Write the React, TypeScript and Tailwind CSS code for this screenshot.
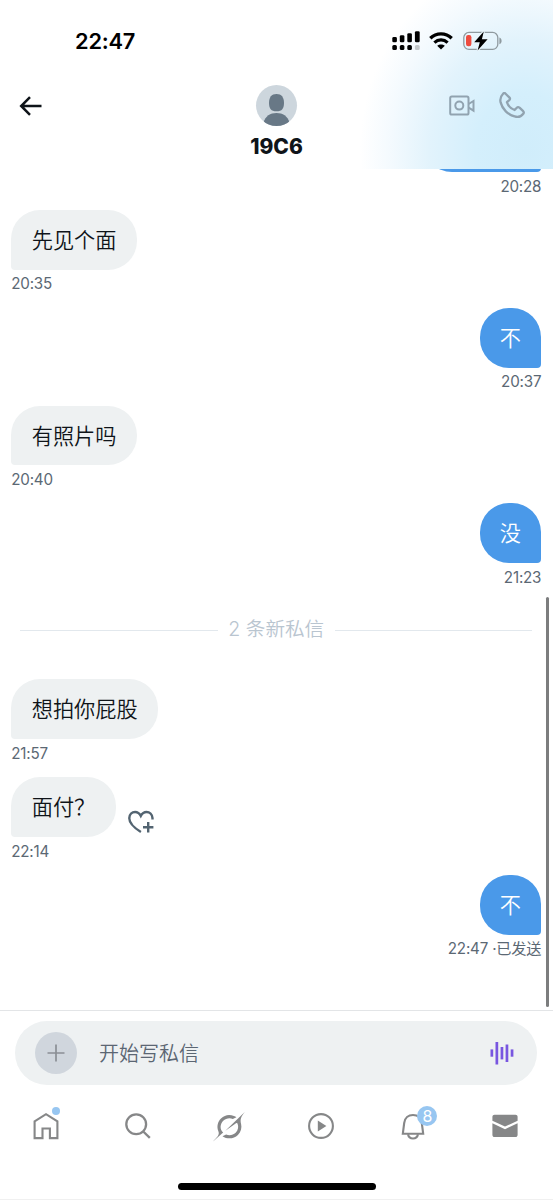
import type { ReactNode } from "react";

enum Side {
  IN = "in",
  OUT = "out",
}

type MessageProps = {
  side: Side;
  text?: string;
  time: string;
  action?: ReactNode;
};

const SignalIcon = () => (
  <svg width="28" height="20" viewBox="0 0 28 20">
    <rect x="0.3" y="6" width="4.6" height="5.3" rx="1.4" />
    <rect x="7.8" y="4.2" width="4.6" height="7.1" rx="1.4" />
    <rect x="15.3" y="2.2" width="4.6" height="9.1" rx="1.4" />
    <rect x="22.9" y="0.2" width="4.8" height="11.1" rx="1.4" />
    <rect x="0.3" y="14" width="4.6" height="4.9" rx="1.5" />
    <rect x="7.8" y="14" width="4.6" height="4.9" rx="1.5" />
    <rect x="15.3" y="14" width="4.6" height="4.9" rx="1.5" />
    <rect x="22.9" y="14" width="4.8" height="4.9" rx="1.5" fill="#c4c8ca" />
  </svg>
);

const WifiIcon = () => (
  <svg width="24" height="18" viewBox="0 0 24 18" fill="none">
    <path d="M1.3 6.3C7.3 0.4 16.7 0.4 22.7 6.3" stroke="#000" strokeWidth="3.3" />
    <path d="M5.4 10.6C9.2 7 14.8 7 18.6 10.6" stroke="#000" strokeWidth="3.2" />
    <path d="M12 17.6L8.2 13.8C10.3 11.9 13.7 11.9 15.8 13.8Z" fill="#000" />
  </svg>
);

const BatteryIcon = () => (
  <svg width="39" height="20" viewBox="0 0 39 20">
    <rect x="0.8" y="1.4" width="34" height="17" rx="5.2" fill="none" stroke="#8f9a9f" strokeWidth="1.3" />
    <path d="M36.4 6.600v6.600c1.400-.5 2.200-1.800 2.200-3.300s-.8-2.800-2.200-3.300z" fill="#8f9a9f" />
    <rect x="3" y="4" width="5.4" height="11.3" rx="2.2" fill="#ee4c3f" />
    <path d="M20.800 0.400L11.200 11.200h5.600l-2.200 8.400L24.600 8.200h-5.700z" stroke="#eaf6fc" strokeWidth="2.200" paintOrder="stroke" />
  </svg>
);

const BackIcon = () => (
  <svg width="24" height="20" viewBox="0 0 24 20" fill="none" stroke="#0f1419" strokeWidth="2.5">
    <path d="M11 1.2L2.200 10l8.800 8.800M2.400 10H22.500" />
  </svg>
);

const VideoIcon = () => (
  <svg width="26" height="22" viewBox="0 0 26 22" fill="none" stroke="#91a3b0" strokeWidth="2">
    <rect x="1.200" y="1.600" width="18.300" height="18" rx="1.600" />
    <circle cx="10.300" cy="10.600" r="4" />
    <path d="M19.600 9l4.900-3v9.600l-4.900-3" />
  </svg>
);

const PhoneIcon = () => (
  <svg width="26" height="27" viewBox="0 0 26 27" fill="none" stroke="#91a3b0" strokeWidth="2.300" strokeLinejoin="round">
    <path d="M6.600 1.700L10.300 5.400c.8.800.8 1.900 0 2.700L7.900 10.200c1.100 3.600 4.100 6.600 7.700 7.800l2.200-2.300c.8-.8 1.900-.8 2.700 0l3.700 3.500c.7.700.7 1.700.1 2.500-2 2.700-5.300 3.700-8.700 2.700C9.100 22.800 3.300 17.100 1.600 10.400.9 7.300 1.800 4 4.100 1.700c.7-.7 1.800-.7 2.500 0z" />
  </svg>
);

const HeartPlusIcon = () => (
  <svg width="28" height="24" viewBox="0 0 28 24" fill="none" stroke="#536471" strokeWidth="2.400">
    <path d="M12.900 22C6.300 17.900 1.100 13.300 1.300 8.100 1.400 4.400 4 2 7.100 2c2.500 0 4.300 1.300 5.700 3.900C14.200 3.300 16 2 18.500 2c3.100 0 5.700 2.400 6 6.100v1.300" />
    <path d="M20.200 12v10.400M15 17.200h10.400" />
  </svg>
);

const VoiceIcon = () => (
  <svg width="24" height="24" viewBox="0 0 24 24" fill="#7856e0">
    <rect x="0.5" y="8.400" width="2.700" height="7.300" />
    <rect x="5.500" y="1" width="2.700" height="22.500" />
    <rect x="10.600" y="6" width="2.700" height="12.400" />
    <rect x="15.600" y="3.500" width="2.700" height="17.500" />
    <rect x="20.700" y="8.400" width="2.700" height="7.300" />
  </svg>
);

const HomeIcon = () => (
  <svg width="26" height="28" viewBox="0 0 26 28" fill="none" stroke="#868788" strokeWidth="2.100">
    <path d="M1.600 9.300L13 2.200l11.400 7.100v16.800h-7.500V16.500H9.500v9.600H1.600z" />
  </svg>
);

const SearchIcon = () => (
  <svg width="26" height="26" viewBox="0 0 26 26" fill="none" stroke="#868788" strokeWidth="2.300">
    <circle cx="11.200" cy="11.300" r="9.900" />
    <path d="M18 18.200l6.800 6.700" />
  </svg>
);

const GrokIcon = () => (
  <svg width="32" height="31" viewBox="0 0 24 24" fill="#868788" preserveAspectRatio="none">
    <path d="M9.270 15.290l7.978-5.897c.391-.29.95-.177 1.137.272.98 2.369.542 5.215-1.410 7.169-1.951 1.954-4.667 2.382-7.149 1.406l-2.711 1.257c3.889 2.661 8.611 2.003 11.562-.953 2.341-2.344 3.066-5.539 2.388-8.420l.006.007c-.983-4.232.242-5.924 2.750-9.383l.179-.248-3.301 3.305v-.01L9.267 15.292M7.623 16.723c-2.792-2.670-2.310-6.801.071-9.184 1.761-1.763 4.647-2.483 7.166-1.425l2.705-1.250a7.808 7.808 0 00-1.829-1A8.975 8.975 0 005.984 5.830c-2.533 2.536-3.330 6.436-1.962 9.764 1.022 2.487-.653 4.246-2.340 6.022C1.083 22.246.483 22.875 0 23.541l7.620-6.815" />
  </svg>
);

const PlayIcon = () => (
  <svg width="26" height="26" viewBox="0 0 26 26">
    <circle cx="13" cy="13" r="11.900" fill="none" stroke="#868788" strokeWidth="2.100" />
    <path d="M9.800 7.600v10.800l8.600-5.400z" fill="#868788" />
  </svg>
);

const BellIcon = () => (
  <svg width="24" height="27" viewBox="0 0 24 27" fill="none" stroke="#868788" strokeWidth="2.100">
    <path d="M1.800 20.800L3.200 10C3.800 5 7.400 2 12 2s8.200 3 8.800 8l1.400 10.800z" />
    <path d="M7 21.200c.5 2.700 2.400 4.300 5 4.300s4.500-1.600 5-4.300" />
  </svg>
);

const MailIcon = () => (
  <svg width="26" height="24" viewBox="0 0 26 24" fill="#868788">
    <path d="M.4 6.700V2.900C.4 1.700 1.300.8 2.500.8h21c1.200 0 2.100.9 2.100 2.100v3.800L13 12.600z" />
    <path d="M.4 9.300L13 15.200l12.600-5.900v11.600c0 1.200-.9 2.100-2.100 2.100h-21C1.300 23 .4 22.100.4 20.900z" />
  </svg>
);

const Avatar = () => (
  <svg width="41" height="41" viewBox="0 0 41 41" className="rounded-full bg-[#cdd6dd]">
    <path d="M20.500 9c5 0 7.500 3.400 7.500 8.800 0 6-2 8.500-7.500 8.500s-7.500-2.500-7.500-8.500C13 12.400 15.500 9 20.500 9z" fill="#687886" />
    <path d="M7.500 37.500c2-6.500 6.600-9.500 13-9.500s11 3 13 9.500l-6 4h-14z" fill="#687886" />
  </svg>
);

const Message = ({ side, text, time, action }: MessageProps) => {
  const mine = side === Side.OUT;
  return (
    <div className={`flex h-[97.8px] shrink-0 flex-col ${mine ? "items-end" : "items-start"}`}>
      <div className="flex h-[59.8px] items-center gap-3">
        <div
          className={
            mine
              ? "flex h-full min-w-[61.5px] items-center rounded-[29px] rounded-br-[4px] bg-[#4a99e9] px-5 pt-[2px] text-[21.2px] font-[350] text-white"
              : "flex h-full items-center rounded-[29px] rounded-bl-[4px] bg-[#eef1f2] px-[20.5px] pt-[2px] text-[21.2px] font-[350] text-[#0f1419]"
          }
        >
          {text ?? <span className="w-[78px]" />}
        </div>
        {action}
      </div>
      <p className="mt-[4.5px] text-[15.2px] leading-[20px] tracking-[-0.2px] text-[#5b6874]">{time}</p>
    </div>
  );
};

const App = () => {
  return (
    <div className="relative flex h-[1200px] w-[553px] flex-col overflow-hidden bg-white font-['Inter','Noto_Sans_CJK_SC',sans-serif]">
      <header className="h-[168.5px] shrink-0 bg-[radial-gradient(ellipse_165px_190px_at_525px_150px,#d0edfb_0%,#d4effc_30%,#e2f3fc_58%,#f4fafe_82%,#ffffff_100%)]">
        <div className="flex h-[82px] items-center justify-between pr-[51px] pl-[75px]">
          <p className="text-[21.8px] font-semibold tracking-[-0.2px] text-black">22:47</p>
          <div className="flex items-center">
            <SignalIcon />
            <div className="ml-[9px]">
              <WifiIcon />
            </div>
            <div className="ml-[10px]">
              <BatteryIcon />
            </div>
          </div>
        </div>
        <div className="grid grid-cols-3">
          <div className="flex h-[47px] items-center pl-[19px]">
            <BackIcon />
          </div>
          <div className="flex flex-col items-center pt-[3px]">
            <Avatar />
            <h1 className="mt-[8px] text-[21px] leading-[26px] font-extrabold text-[#0f1419]">19C6</h1>
          </div>
          <div className="flex h-[47px] items-center justify-end gap-6 pr-[27.5px]">
            <VideoIcon />
            <PhoneIcon />
          </div>
        </div>
      </header>

      <main className="flex h-[841.5px] shrink-0 flex-col overflow-hidden pr-[11.7px] pl-[11.2px]">
        <div className="-mt-[56.3px] shrink-0">
          <Message side={Side.OUT} time="20:28" />
        </div>
        <Message side={Side.IN} text="先见个面" time="20:35" />
        <Message side={Side.OUT} text="不" time="20:37" />
        <Message side={Side.IN} text="有照片吗" time="20:40" />
        <Message side={Side.OUT} text="没" time="21:23" />
        <div className="flex h-[78.3px] shrink-0 items-start gap-[10.5px] px-[9px] pt-[14px]">
          <div className="mt-[15px] h-px flex-1 bg-[#e2e8ed]" />
          <p className="text-[19.6px] leading-[28px] font-[350] text-[#b9c5d0]">2 条新私信</p>
          <div className="mt-[15px] h-px flex-1 bg-[#e2e8ed]" />
        </div>
        <Message side={Side.IN} text="想拍你屁股" time="21:57" />
        <Message
          side={Side.IN}
          text="面付？"
          time="22:14"
          action={
            <div className="pt-[30px]">
              <HeartPlusIcon />
            </div>
          }
        />
        <Message side={Side.OUT} text="不" time="22:47 ·已发送" />
      </main>
      {/* scroll thumb floats over the conversation */}
      <div className="absolute top-[597px] right-[4px] h-[410px] w-[3.5px] rounded-full bg-[#7c7d7e]" />

      <section className="h-[75px] shrink-0 border-t border-[#e3e5e7] pt-[10px] pr-[16px] pl-[15px]">
        <div className="flex h-[64px] items-center rounded-full bg-[#eef1f2] pr-[23px] pl-5">
          <div className="flex size-[42px] items-center justify-center rounded-full bg-[#d0d6dd]">
            <svg width="18" height="18" viewBox="0 0 18 18" stroke="#8a8f95" strokeWidth="1.7">
              <path d="M9 .5v17M.5 9h17" />
            </svg>
          </div>
          <p className="ml-[22px] flex-1 pt-[2px] text-[20px] font-[350] text-[#5b6673]">开始写私信</p>
          <VoiceIcon />
        </div>
      </section>

      <nav className="grid h-[82px] shrink-0 grid-cols-6 items-center justify-items-center pr-[2.5px]">
        <div className="relative">
          <HomeIcon />
          <span className="absolute -top-[5px] right-[-1px] size-[8px] rounded-full bg-[#97c6f1]" />
        </div>
        <SearchIcon />
        <GrokIcon />
        <PlayIcon />
        <div className="relative">
          <BellIcon />
          <span className="absolute top-[-7px] left-[16.5px] flex size-[20px] items-center justify-center rounded-full bg-[#97c6f1] pt-px text-[16px] text-white">
            8
          </span>
        </div>
        <MailIcon />
      </nav>
      <div className="flex flex-1 flex-col items-center border-b border-[#f0f0f0] pt-[16px]">
        <div className="h-[6.5px] w-[198px] rounded-full bg-black" />
      </div>
    </div>
  );
};

export default App;
